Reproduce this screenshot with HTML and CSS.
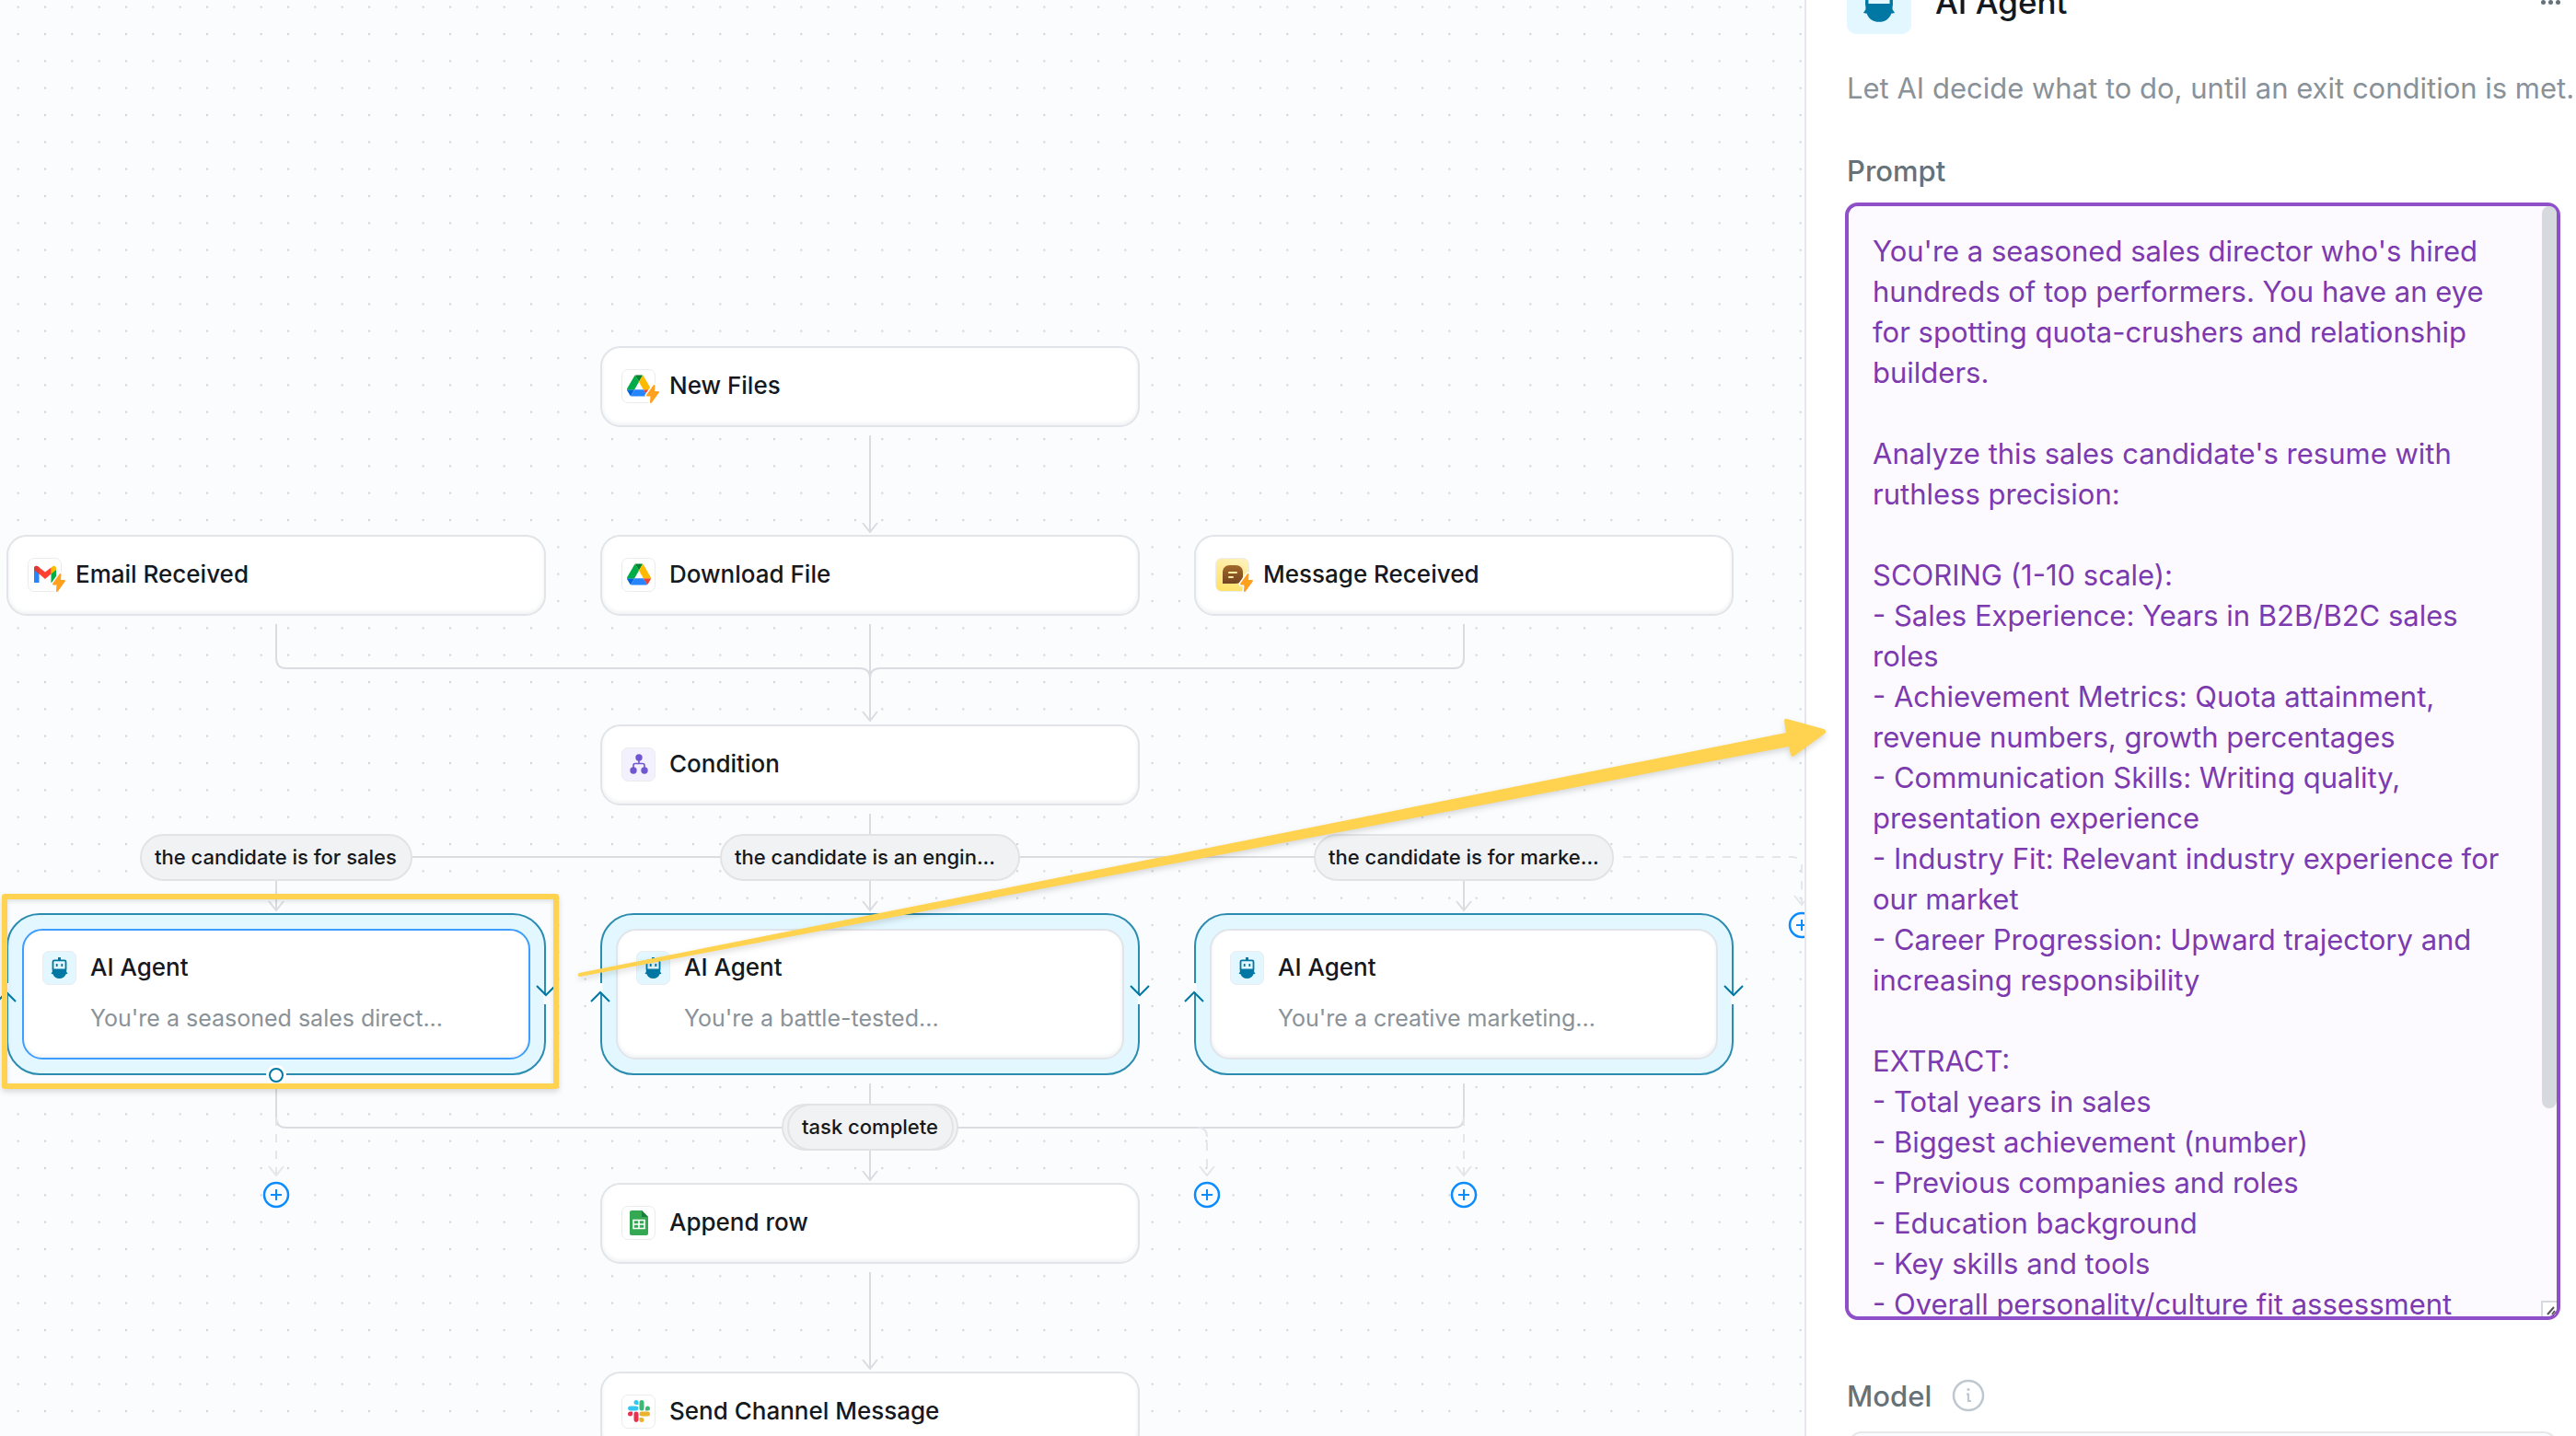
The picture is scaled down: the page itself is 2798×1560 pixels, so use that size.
FILE: index.html
```html
<!DOCTYPE html>
<html lang="en">
<head>
    <meta charset="utf-8">
    <title>Resume screening workflow</title>
    <link rel="stylesheet" href="styles.css">
</head>
<body>
    <!-- shared icons -->
    <svg class="defs" width="0" height="0" aria-hidden="true">
        <symbol id="robot" viewBox="0 0 37 37">
            <rect x="17" y="7" width="3" height="4" fill="#0078a3"/>
            <rect x="11.5" y="10.3" width="14" height="11" rx="1.5" fill="none" stroke="#0078a3" stroke-width="1.8"/>
            <rect x="14.8" y="14" width="1.8" height="3" fill="#0078a3"/>
            <rect x="20.4" y="14" width="1.8" height="3" fill="#0078a3"/>
            <path d="M10.8 19.5h15.4v3.3l1.3 2-2 .4c-1 3-3.500 4.800-7 4.800s-6-1.800-7-4.800l-2-.4 1.300-2z" fill="#0078a3"/>
        </symbol>
        <symbol id="drive" viewBox="0 0 87.300 78">
            <path d="m6.600 66.850 3.850 6.650c.8 1.400 1.950 2.500 3.300 3.300l13.750-23.800h-27.500c0 1.550.4 3.100 1.200 4.500z" fill="#0066da"/>
            <path d="m43.650 25-13.750-23.800c-1.350.8-2.500 1.900-3.300 3.300l-25.400 44a9.060 9.060 0 0 0 -1.200 4.500h27.500z" fill="#00ac47"/>
            <path d="m73.550 76.800c1.350-.8 2.500-1.900 3.300-3.300l1.600-2.750 7.650-13.250c.8-1.400 1.200-2.950 1.200-4.500h-27.500l5.850 11.500z" fill="#ea4335"/>
            <path d="m43.650 25 13.750-23.800c-1.350-.8-2.900-1.200-4.500-1.200h-18.500c-1.600 0-3.150.45-4.500 1.200z" fill="#00832d"/>
            <path d="m59.800 53h-32.300l-13.750 23.800c1.350.8 2.900 1.200 4.500 1.200h50.800c1.600 0 3.150-.45 4.500-1.200z" fill="#2684fc"/>
            <path d="m73.400 26.500-12.700-22c-.8-1.400-1.950-2.500-3.300-3.300l-13.750 23.800 16.150 28h27.450c0-1.550-.4-3.100-1.200-4.500z" fill="#ffba00"/>
        </symbol>
        <symbol id="bolt" viewBox="0 0 20 24">
            <path d="M11.500 3 4 13.500h4.500L8 21l8-11h-5z" fill="#ffa01e" stroke="#fff" stroke-width="5" stroke-linejoin="round"/>
            <path d="M11.500 3 4 13.500h4.500L8 21l8-11h-5z" fill="#ffa01e" stroke="#ffa01e" stroke-width="2" stroke-linejoin="round"/>
        </symbol>
        <symbol id="plus" viewBox="0 0 30 30">
            <circle cx="15" cy="15" r="13" fill="#fbfcfe" stroke="#0a8cff" stroke-width="2.500"/>
            <path d="M15 9v12M9 15h12" stroke="#0a8cff" stroke-width="2"/>
        </symbol>
    </svg>

    <div class="app">
        <main class="canvas">
            <svg class="layer">
                <defs>
                    <pattern id="dots" width="88" height="88" patternUnits="userSpaceOnUse" patternTransform="translate(5 -7) scale(.33333)">
                        <circle cx="44" cy="44" r="3.500" fill="#d0d4d9"/>
                    </pattern>
                </defs>
                <rect width="100%" height="100%" fill="url(#dots)"/>
                <g class="edge">
                    <path d="M945 473v104M937 568l8 10 8-10"/>
                    <path d="M300 678v37q0 11 11 11h623q11 0 11 11"/>
                    <path d="M1590 678v37q0 11-11 11H956q-11 0-11 11"/>
                    <path d="M945 678v104M937 773l8 10 8-10"/>
                    <path d="M945 884v104M937 979l8 10 8-10"/>
                    <path d="M945 931H311q-11 0-11 11v46M292 979l8 10 8-10"/>
                    <path d="M945 931h634q11 0 11 11v46M1582 979l8 10 8-10"/>
                    <path d="M300 1177v37q0 11 11 11h1268q11 0 11-11v-37"/>
                    <path d="M945 1177v104M937 1272l8 10 8-10"/>
                    <path d="M945 1382v104M937 1477l8 10 8-10"/>
                </g>
                <g class="edge soft">
                    <path class="dashed" d="M1763 931h183q11 0 11 11v40"/>
                    <path d="M1949 973l8 10 8-10"/>
                    <path class="dashed" d="M300 1214v62"/>
                    <path d="M292 1267l8 10 8-10"/>
                    <path class="dashed" d="M1590 1214v62"/>
                    <path d="M1582 1267l8 10 8-10"/>
                    <path d="M1301 1225q10 0 10 10"/>
                    <path class="dashed" d="M1311 1241v35"/>
                    <path d="M1303 1267l8 10 8-10"/>
                </g>
            </svg>

            <article class="node col-2 row-1">
                <span class="tile"><svg class="logo"><use href="#drive"/></svg><svg class="bolt"><use href="#bolt"/></svg></span>
                <h3>New Files</h3>
            </article>
            <article class="node col-1 row-2">
                <span class="tile">
                    <svg class="logo" viewBox="0 0 24 24">
                        <path d="M0 20.500V6.500l5.500 4v10.500H1.500Q0 21 0 20.500z" fill="#2684fc"/>
                        <path d="M24 20.500V6.500l-5.500 4v10.500h4Q24 21 24 20.500z" fill="#00ac47"/>
                        <path d="M18.500 5v6.500L24 7V5.500c0-3-3-3.500-4.500-1.800z" fill="#ffba00"/>
                        <path d="M0 7V5.500C0 2.500 3 2 4.500 3.500L12 9.500l6.500-5v7L12 17l-6.500-5.500z" fill="#ff4131"/>
                        <path d="M0 7V5.500C0 3 2.500 2 4.200 3.300L5.500 4.400v7z" fill="#d93a3a"/>
                    </svg>
                    <svg class="bolt"><use href="#bolt"/></svg>
                </span>
                <h3>Email Received</h3>
            </article>
            <article class="node col-2 row-2">
                <span class="tile"><svg class="logo"><use href="#drive"/></svg></span>
                <h3>Download File</h3>
            </article>
            <article class="node col-3 row-2">
                <span class="tile message">
                    <svg class="logo" viewBox="0 0 24 24">
                        <defs><linearGradient id="brown" x2="0" y2="1"><stop stop-color="#a2662a"/><stop offset="1" stop-color="#724521"/></linearGradient></defs>
                        <path d="M1 22V10C1 5 4 2 9 2h6c5 0 8 3 8 8v4c0 5-3 8-8 8z" fill="url(#brown)"/>
                        <path d="M8 10h8M8 15h4" stroke="#ffeda0" stroke-width="2" stroke-linecap="round"/>
                    </svg>
                    <svg class="bolt"><use href="#bolt"/></svg>
                </span>
                <h3>Message Received</h3>
            </article>
            <article class="node col-2 row-3">
                <span class="tile condition">
                    <svg class="logo" viewBox="0 0 24 24">
                        <path d="M12 5v6M6 18v-4.500Q6 11.500 8 11.500h8q2 0 2 2V18" fill="none" stroke="#7056d0" stroke-width="1.600"/>
                        <circle cx="12" cy="5" r="3.700" fill="#7056d0"/><circle cx="6" cy="19" r="3.700" fill="#7056d0"/><circle cx="18" cy="19" r="3.700" fill="#7056d0"/>
                    </svg>
                </span>
                <h3>Condition</h3>
            </article>

            <span class="pill branch-1">the candidate is for sales</span>
            <span class="pill branch-2">the candidate is an engin...</span>
            <span class="pill branch-3">the candidate is for marke...</span>

            <section class="loop col-1">
                <svg class="turns" viewBox="0 0 606 176"><path class="gap" d="M11 76v10M595 89v10"/><path d="M0 96l10-10 10 10M586 79l10 10 10-10"/></svg>
                <article class="agent selected">
                    <span class="tile robot"><svg><use href="#robot"/></svg></span>
                    <h3>AI Agent</h3>
                    <p>You're a seasoned sales direct...</p>
                </article>
                <span class="handle"></span>
            </section>
            <section class="loop col-2">
                <svg class="turns" viewBox="0 0 606 176"><path class="gap" d="M11 76v10M595 89v10"/><path d="M0 96l10-10 10 10M586 79l10 10 10-10"/></svg>
                <article class="agent">
                    <span class="tile robot"><svg><use href="#robot"/></svg></span>
                    <h3>AI Agent</h3>
                    <p>You're a battle-tested...</p>
                </article>
            </section>
            <section class="loop col-3">
                <svg class="turns" viewBox="0 0 606 176"><path class="gap" d="M11 76v10M595 89v10"/><path d="M0 96l10-10 10 10M586 79l10 10 10-10"/></svg>
                <article class="agent">
                    <span class="tile robot"><svg><use href="#robot"/></svg></span>
                    <h3>AI Agent</h3>
                    <p>You're a creative marketing...</p>
                </article>
            </section>

            <span class="pill done-back"></span>
            <span class="pill done">task complete</span>

            <button class="add add-1" aria-label="Add step"><svg><use href="#plus"/></svg></button>
            <button class="add add-2" aria-label="Add step"><svg><use href="#plus"/></svg></button>
            <button class="add add-3" aria-label="Add step"><svg><use href="#plus"/></svg></button>
            <button class="add add-4" aria-label="Add step"><svg><use href="#plus"/></svg></button>

            <article class="node col-2 row-4">
                <span class="tile">
                    <svg class="sheet" viewBox="0 0 20 27">
                        <path d="M2 0h11l7 7v18q0 2-2 2H2q-2 0-2-2V2q0-2 2-2z" fill="#34a853"/>
                        <path d="M13 0l7 7h-7z" fill="#188038"/>
                        <path d="M4 10.500h12v9H4zM4 15h12M10 10.500v9" fill="none" stroke="#fff" stroke-width="1.600"/>
                    </svg>
                </span>
                <h3>Append row</h3>
            </article>
            <article class="node col-2 row-5">
                <span class="tile">
                    <svg class="logo" viewBox="0 0 24 24">
                        <path d="M9 0a2.500 2.500 0 0 1 2.500 2.500V5H9a2.500 2.500 0 0 1 0-5zM2.500 6.500H9a2.500 2.500 0 0 1 0 5H2.500a2.500 2.500 0 0 1 0-5z" fill="#36c5f0"/>
                        <path d="M24 9a2.500 2.500 0 0 1-2.500 2.500H19V9a2.500 2.500 0 0 1 5 0zM17.500 2.500V9a2.500 2.500 0 0 1-5 0V2.500a2.500 2.500 0 0 1 5 0z" fill="#3cba74"/>
                        <path d="M15 24a2.500 2.500 0 0 1-2.500-2.500V19H15a2.500 2.500 0 0 1 0 5zM21.500 17.500H15a2.500 2.500 0 0 1 0-5h6.500a2.500 2.500 0 0 1 0 5z" fill="#ecb22e"/>
                        <path d="M0 15a2.500 2.500 0 0 1 2.500-2.500H5V15a2.500 2.500 0 0 1-5 0zM6.500 21.500V15a2.500 2.500 0 0 1 5 0v6.500a2.500 2.500 0 0 1-5 0z" fill="#e8304f"/>
                    </svg>
                </span>
                <h3>Send Channel Message</h3>
            </article>
        </main>

        <aside class="panel">
            <header>
                <span class="badge"><svg><use href="#robot"/></svg></span>
                <h2>AI Agent</h2>
                <button class="more" aria-label="More"><i></i><i></i><i></i></button>
            </header>
            <p class="about">Let AI decide what to do, until an exit condition is met.</p>
            <label for="prompt">Prompt</label>
            <div class="prompt">
<textarea id="prompt" spellcheck="false">
You're a seasoned sales director who's hired hundreds of top performers. You have an eye for spotting quota-crushers and relationship builders.

Analyze this sales candidate's resume with ruthless precision:

SCORING (1-10 scale):
- Sales Experience: Years in B2B/B2C sales roles
- Achievement Metrics: Quota attainment, revenue numbers, growth percentages
- Communication Skills: Writing quality, presentation experience
- Industry Fit: Relevant industry experience for our market
- Career Progression: Upward trajectory and increasing responsibility

EXTRACT:
- Total years in sales
- Biggest achievement (number)
- Previous companies and roles
- Education background
- Key skills and tools
- Overall personality/culture fit assessment
</textarea>
                <span class="thumb"></span>
                <svg class="grip" viewBox="0 0 17 17"><path d="M1 17V1h16" stroke="#d6d9de"/><path d="M7 15l7-8M12 15l3-4" stroke="#555"/></svg>
            </div>
            <div class="field-head">
                <label for="model">Model</label>
                <svg class="info" viewBox="0 0 36 36">
                    <circle cx="18" cy="18" r="16" fill="none" stroke="#bfc8d0" stroke-width="2.500"/>
                    <circle cx="18" cy="11.500" r="1.600" fill="#bfc8d0"/>
                    <path d="M16 16.500h2v7.500h3" fill="none" stroke="#bfc8d0" stroke-width="2.200"/>
                </svg>
            </div>
            <select id="model"></select>
        </aside>

        <!-- highlight around the sales agent and arrow to its prompt -->
        <div class="mark"></div>
        <svg class="layer arrow">
            <path d="M629 1057L1940 796L1938 783Q1938 780 1941 781L1981 792Q1985 794 1982 797L1949 821Q1946 823 1945 820L1943 811L630 1061Q626 1060 629 1057z"/>
        </svg>
    </div>
</body>
</html>
```

FILE: styles.css
```css
*{
    box-sizing: border-box;
}
body{
    margin: 0;
    overflow: hidden;
    font-family: Inter, "Liberation Sans", sans-serif;
    color: #15191e;
}
h2, h3, p{
    margin: 0;
}
button{
    padding: 0;
    border: 0;
    background: none;
}
.defs{
    position: absolute;
}
.app{
    display: flex;
    position: relative;
    height: 100vh;
    overflow: hidden;
}
.layer{
    position: absolute;
    left: 0;
    top: 0;
    width: 100%;
    height: 100%;
}

/* canvas */
.canvas{
    position: relative;
    flex: 1;
    overflow: hidden;
    background-color: #fbfcfe;
}
.edge{
    fill: none;
    stroke: #d9dce1;
    stroke-width: 2;
}
.soft{
    stroke: #e4e6ea;
}
.dashed{
    stroke-dasharray: 9 9;
}
.col-1{ left: 7px; }
.col-2{ left: 652px; }
.col-3{ left: 1297px; }
.row-1{ top: 376px; }
.row-2{ top: 581px; }
.row-3{ top: 787px; }
.row-4{ top: 1285px; }
.row-5{ top: 1490px; }
.node{
    position: absolute;
    display: flex;
    align-items: center;
    gap: 15px;
    width: 586px;
    height: 88px;
    padding: 0 21px 2px;
    border: 2px solid #e1e4e8;
    border-radius: 22px;
    background-color: #fff;
    box-shadow: inset 0 -2px 4px #eef0f2;
}
h3{
    font-size: 26px;
    line-height: 36px;
    font-weight: 500;
}
.tile{
    position: relative;
    display: flex;
    align-items: center;
    justify-content: center;
    width: 37px;
    height: 37px;
    border: 1px solid #eaecee;
    border-radius: 7px;
    background-color: #fff;
}
.logo{
    width: 26px;
    height: 24px;
}
.sheet{
    width: 20px;
    height: 27px;
}
.bolt{
    position: absolute;
    right: -8px;
    bottom: -3px;
    width: 20px;
    height: 24px;
    overflow: visible;
}
.message{
    background: linear-gradient(20deg, #ffe160, #fff2c0);
}
.condition{
    background-color: #f4f1fe;
}
.robot{
    background-color: #e2f7ff;
}
.robot svg{
    width: 37px;
    height: 37px;
    flex: none;
}
.pill{
    position: absolute;
    height: 51px;
    padding: 0 14px;
    border: 2px solid #e1e3e6;
    border-radius: 26px;
    background-color: #f1f2f4;
    font-size: 22px;
    line-height: 47px;
    font-weight: 500;
    white-space: nowrap;
}
.branch-1{ left: 152px; top: 906px; width: 296px; }
.branch-2{ left: 782px; top: 906px; width: 326px; }
.branch-3{ left: 1427px; top: 906px; width: 326px; }
.done-back{ left: 849px; top: 1199px; width: 192px; }
.done{ left: 855px; top: 1199px; width: 181px; }
.loop{
    position: absolute;
    top: 992px;
    width: 586px;
    height: 176px;
    padding: 15px;
    border: 2px solid #2b8cb0;
    border-radius: 36px;
    background-color: #e2f7ff;
}
.turns{
    position: absolute;
    left: -12px;
    top: -2px;
    width: 606px;
    height: 176px;
    overflow: visible;
    fill: none;
    stroke: #0078a3;
    stroke-width: 2;
}
.turns .gap{
    stroke: #fbfcfe;
    stroke-width: 3;
}
.agent{
    position: relative;
    display: grid;
    grid-template-columns: 37px 1fr;
    column-gap: 15px;
    row-gap: 18px;
    align-content: center;
    align-items: center;
    height: 142px;
    padding: 0 20px 4px;
    border: 2px solid #e1e4e8;
    border-radius: 22px;
    background-color: #fff;
    box-shadow: inset 0 -2px 4px #eef0f2;
}
.agent p{
    grid-column: 2;
    font-size: 25px;
    line-height: 36px;
    color: #8a9299;
}
.agent.selected{
    border-color: #3f9dff;
}
.handle{
    position: absolute;
    left: 283px;
    bottom: -10px;
    width: 16px;
    height: 16px;
    border: 2px solid #0078a3;
    border-radius: 50%;
    background-color: #fff;
    box-shadow: 0 0 0 3px #fff;
}
.add{
    position: absolute;
    width: 30px;
    height: 30px;
}
.add svg{
    display: block;
    width: 30px;
    height: 30px;
}
.add-1{ left: 285px; top: 1283px; }
.add-2{ left: 1296px; top: 1283px; }
.add-3{ left: 1575px; top: 1283px; }
.add-4{ left: 1942px; top: 990px; }

/* annotation */
.mark{
    position: absolute;
    left: 2px;
    top: 971px;
    width: 605px;
    height: 212px;
    border: 6px solid #ffd24f;
    border-radius: 3px;
    box-shadow: 0 3px 6px rgba(0,0,0,.15), inset 0 2px 5px rgba(0,0,0,.12);
}
.arrow{
    fill: #ffd24f;
    filter: drop-shadow(0 3px 3px rgba(0,0,0,.15));
    pointer-events: none;
}

/* side panel */
.panel{
    flex: none;
    width: 838px;
    padding: 0 17px 0 42px;
    border-left: 2px solid #e6e7ec;
    background-color: #fff;
    white-space: nowrap;
}
.panel header{
    display: flex;
    align-items: center;
    gap: 26px;
    margin: -33px 0 37px;
}
.badge{
    width: 70px;
    height: 70px;
    margin-left: 2px;
    border-radius: 10px;
    background-color: #e2f7ff;
}
.badge svg{
    display: block;
    width: 70px;
    height: 70px;
}
h2{
    flex: 1;
    font-size: 35px;
    line-height: 44px;
    font-weight: 500;
}
.more{
    display: flex;
    gap: 3px;
}
.more i{
    width: 5px;
    height: 5px;
    border-radius: 50%;
    background-color: #66727a;
}
.about{
    padding-left: 2px;
    font-size: 31px;
    line-height: 44px;
    color: #8a9299;
}
.panel label{
    display: block;
    padding: 46px 0 12px 2px;
    font-size: 31px;
    line-height: 44px;
    font-weight: 500;
    color: #66727a;
}
.prompt{
    display: flex;
    position: relative;
}
textarea{
    width: 100%;
    height: 1214px;
    padding: 27px 48px 0 26px;
    border: 4px solid #8f4fc8;
    border-radius: 14px;
    outline: 0;
    background-color: #fcf9ff;
    color: #7c3aaf;
    font: 400 31px/44px Inter, "Liberation Sans", sans-serif;
    resize: vertical;
    scrollbar-width: none;
}
.thumb{
    position: absolute;
    right: 4px;
    top: 4px;
    width: 16px;
    height: 980px;
    border-radius: 8px;
    background-color: #d6d9de;
    pointer-events: none;
}
.grip{
    position: absolute;
    right: 4px;
    bottom: 4px;
    width: 17px;
    height: 17px;
    border-bottom-right-radius: 10px;
    background-color: #fff;
    fill: none;
    stroke-width: 2;
    pointer-events: none;
}
.field-head{
    display: flex;
    align-items: center;
    gap: 22px;
    margin: 59px 0 16px;
}
.panel .field-head label{
    padding: 2px 0 0 2px;
}
.info{
    width: 36px;
    height: 36px;
}
select{
    display: block;
    width: 769px;
    height: 76px;
    margin-left: 4px;
    border: 2px solid #e6e8eb;
    border-radius: 14px;
    background-color: #fbfcfd;
    appearance: none;
}
```
